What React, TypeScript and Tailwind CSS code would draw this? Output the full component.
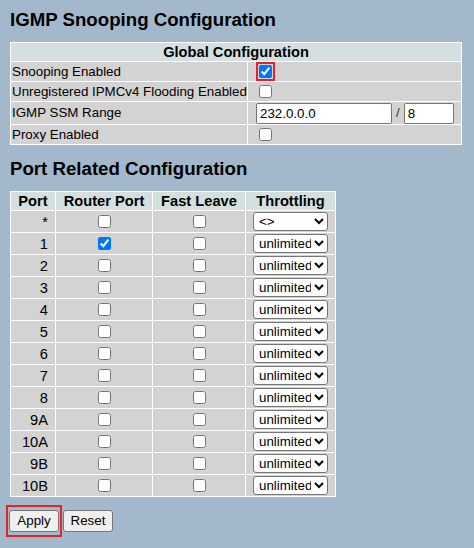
import React from "react";

const ports = ["*", "1", "2", "3", "4", "5", "6", "7", "8", "9A", "10A", "9B", "10B"];

function Check({ checked = false }: { checked?: boolean }) {
  return (
    <input
      type="checkbox"
      defaultChecked={checked}
      className="m-0 h-[13px] w-[13px] block"
    />
  );
}

function Sel({ value }: { value: string }) {
  return (
    <select
      defaultValue={value}
      className="h-[19px] w-[75px] rounded-[3px] border border-[#767676] bg-white pl-[1px] text-[13.33px] leading-[15px] text-black"
    >
      <option value="<>">{"<>"}</option>
      <option value="unlimited">unlimited</option>
      <option value="1">1</option>
      <option value="2">2</option>
    </select>
  );
}

export default function App() {
  return (
    <div className="min-h-[548px] w-full bg-[#a3b9cb] pl-[10px] pt-[9px] font-['Liberation_Sans',Arial,sans-serif] text-[13.33px] text-black">
      <h1 className="m-0 text-[18.67px] font-bold leading-[22px]">IGMP Snooping Configuration</h1>

      <div className="mt-[11px] grid w-[452px] grid-cols-[236px_213px] gap-px bg-white p-px">
        <div className="col-span-2 flex h-[18px] items-center justify-center bg-[#d3e0df] text-[14.67px] font-bold">
          Global Configuration
        </div>
        <div className="flex h-[19px] items-center bg-[#d3d3d3] pl-[1px]">Snooping Enabled</div>
        <div className="flex h-[19px] items-center bg-[#d3d3d3] pl-[8px]">
          <span className="block border-2 border-[#e4222b] p-px">
            <Check checked />
          </span>
        </div>
        <div className="flex h-[19px] items-center bg-[#d3d3d3] pl-[1px]">Unregistered IPMCv4 Flooding Enabled</div>
        <div className="flex h-[19px] items-center bg-[#d3d3d3] pl-[11px]">
          <Check />
        </div>
        <div className="flex h-[22px] items-center bg-[#d3d3d3] pl-[1px]">IGMP SSM Range</div>
        <div className="flex h-[22px] items-center gap-[4px] bg-[#d3d3d3] pl-[8px]">
          <input
            type="text"
            defaultValue="232.0.0.0"
            className="h-[21px] w-[136px] rounded-[2px] border border-[#767676] bg-white px-[3px] text-[13.33px] text-black"
          />
          <span className="text-[#333]">/</span>
          <input
            type="text"
            defaultValue="8"
            className="h-[21px] w-[50px] rounded-[2px] border border-[#767676] bg-white px-[3px] text-[13.33px] text-black"
          />
        </div>
        <div className="flex h-[19px] items-center bg-[#d3d3d3] pl-[1px]">Proxy Enabled</div>
        <div className="flex h-[19px] items-center bg-[#d3d3d3] pl-[11px]">
          <Check />
        </div>
      </div>

      <h2 className="m-0 mt-[13px] text-[18.67px] font-bold leading-[22px]">Port Related Configuration</h2>

      <div className="mt-[11px] grid w-[326px] grid-cols-[44px_96px_92px_89px] gap-px bg-white p-px">
        <div className="flex h-[18px] items-center justify-center bg-[#d3e0df] text-[14.67px] font-bold">Port</div>
        <div className="flex h-[18px] items-center justify-center bg-[#d3e0df] text-[14.67px] font-bold">Router Port</div>
        <div className="flex h-[18px] items-center justify-center bg-[#d3e0df] text-[14.67px] font-bold">Fast Leave</div>
        <div className="flex h-[18px] items-center justify-center bg-[#d3e0df] text-[14.67px] font-bold">Throttling</div>
        {ports.map((p) => (
          <React.Fragment key={p}>
            <div className="flex h-[21px] items-center justify-end bg-[#d3d3d3] pr-[7px] text-[14.67px]">{p}</div>
            <div className="flex h-[21px] items-center justify-center bg-[#d3d3d3]">
              <Check checked={p === "1"} />
            </div>
            <div className="flex h-[21px] items-center justify-center bg-[#d3d3d3]">
              <Check />
            </div>
            <div className="flex h-[21px] items-center justify-center bg-[#d3d3d3]">
              <Sel value={p === "*" ? "<>" : "unlimited"} />
            </div>
          </React.Fragment>
        ))}
      </div>

      <div className="mt-[8px] -ml-[4px] flex items-center">
        <span className="block border-2 border-[#e4222b] px-px py-[3px]">
          <button className="block h-[22px] w-[50px] rounded-[3px] border border-[#767676] bg-[#efefef] text-[13.33px] text-black">
            Apply
          </button>
        </span>
        <button className="ml-px block h-[22px] w-[50px] rounded-[3px] border border-[#767676] bg-[#efefef] text-[13.33px] text-black">
          Reset
        </button>
      </div>
    </div>
  );
}
